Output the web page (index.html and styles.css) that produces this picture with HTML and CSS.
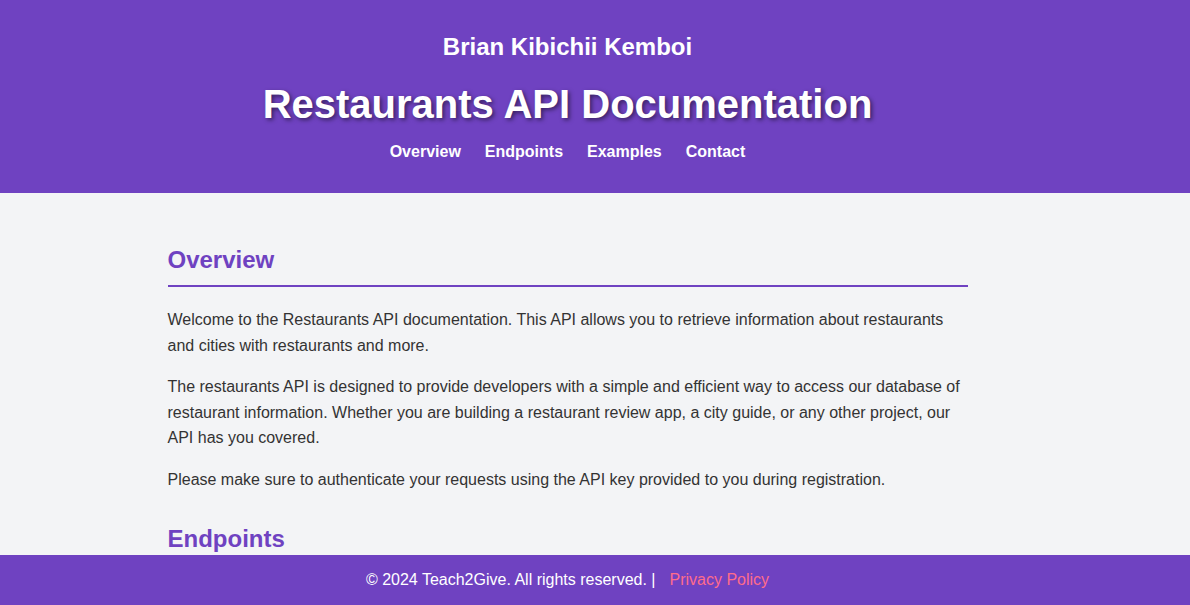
FILE: index.html
```html
<!DOCTYPE html>
<html lang="en">
<head>
<meta charset="utf-8">
<title>Restaurants API Documentation</title>
<link rel="stylesheet" href="styles.css">
</head>
<body>
<header class="site-header">
  <div class="header-inner">
    <p class="author">Brian Kibichii Kemboi</p>
    <h1 class="title">Restaurants API Documentation</h1>
    <nav class="nav">
      <a href="#overview">Overview</a>
      <a href="#endpoints">Endpoints</a>
      <a href="#examples">Examples</a>
      <a href="#contact">Contact</a>
    </nav>
  </div>
</header>
<main class="main">
  <div class="container">
    <section class="section" id="overview">
      <h2 class="section-title">Overview</h2>
      <p>Welcome to the Restaurants API documentation. This API allows you to retrieve information about restaurants and cities with restaurants and more.</p>
      <p>The restaurants API is designed to provide developers with a simple and efficient way to access our database of restaurant information. Whether you are building a restaurant review app, a city guide, or any other project, our API has you covered.</p>
      <p>Please make sure to authenticate your requests using the API key provided to you during registration.</p>
    </section>
    <section class="section" id="endpoints">
      <h2 class="section-title">Endpoints</h2>
      <p>Below are the available endpoints of the Restaurants API.</p>
    </section>
  </div>
</main>
<footer class="footer">
  <div class="footer-inner">
    <span>&copy; 2024 Teach2Give. All rights reserved. |</span>
    <a class="footer-link" href="#">Privacy Policy</a>
  </div>
</footer>
</body>
</html>
```
FILE: styles.css
```css
* { box-sizing: border-box; }
html, body { margin: 0; padding: 0; }
body {
  font-family: "Liberation Sans", Arial, sans-serif;
  background: #f3f4f6;
  color: #333;
}
.site-header {
  background: #6f42c1;
  color: #fff;
  padding: 33px 55px 32px 0;
}
.header-inner {
  display: flex;
  flex-direction: column;
  align-items: center;
}
.author {
  margin: 0;
  font-size: 24px;
  line-height: 28px;
  font-weight: bold;
}
.title {
  margin: 20px 0 0;
  font-size: 40px;
  line-height: 46px;
  font-weight: bold;
  text-shadow: 2px 2px 4px rgba(0, 0, 0, 0.5);
}
.nav {
  margin-top: 16px;
  display: flex;
  gap: 24px;
  line-height: 18px;
}
.nav a {
  color: #fff;
  text-decoration: none;
  font-weight: bold;
  font-size: 16px;
}
.main {
  padding: 0 55px 80px 0;
}
.container {
  width: 800px;
  margin: 0 auto;
  padding-top: 53px;
}
.section {
  display: flow-root;
  margin-bottom: 16px;
}
.section-title {
  margin: 0 0 20px;
  padding-bottom: 11px;
  border-bottom: 2px solid #6f42c1;
  color: #6f42c1;
  font-size: 24px;
  line-height: 28px;
}
.section p {
  margin: 0 0 16px;
  font-size: 16px;
  line-height: 1.6;
}
.footer {
  position: fixed;
  left: 0;
  right: 0;
  bottom: 0;
  height: 50px;
  background: #6f42c1;
  color: #fff;
}
.footer-inner {
  height: 100%;
  padding-right: 55px;
  display: flex;
  align-items: center;
  justify-content: center;
  gap: 14px;
  font-size: 16px;
}
.footer-link {
  color: #ff6b8b;
  text-decoration: none;
}
```
